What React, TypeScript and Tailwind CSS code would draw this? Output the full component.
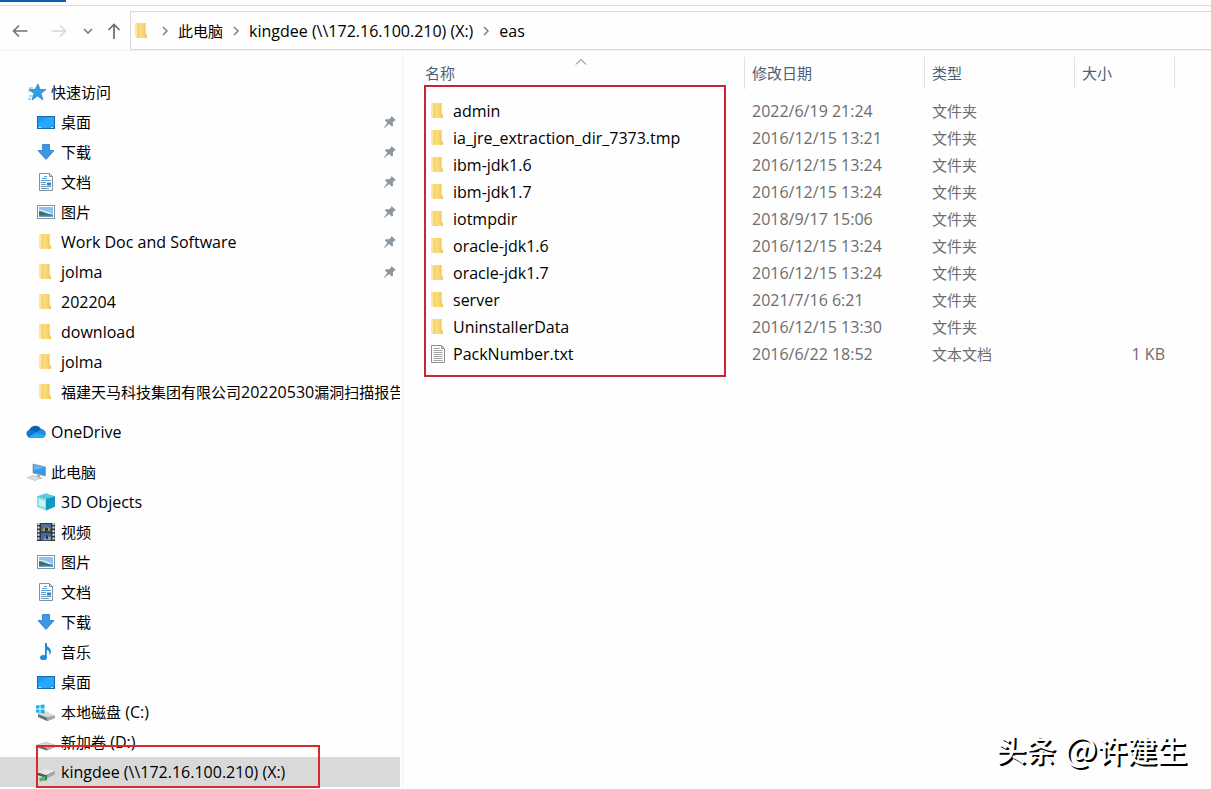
import type { ReactNode } from 'react'

type IconName =
  | 'star' | 'desktop' | 'download' | 'document' | 'picture' | 'folder' | 'cloud'
  | 'computer' | 'cube' | 'video' | 'music' | 'systemDrive' | 'drive' | 'netDrive' | 'text'

interface NavItem {
  label: string
  icon: IconName
  pinned?: boolean
  selected?: boolean
}

interface NavGroup {
  label: string
  icon: IconName
  items: NavItem[]
}

const navGroups: NavGroup[] = [
  {
    label: '快速访问',
    icon: 'star',
    items: [
      { label: '桌面', icon: 'desktop', pinned: true },
      { label: '下载', icon: 'download', pinned: true },
      { label: '文档', icon: 'document', pinned: true },
      { label: '图片', icon: 'picture', pinned: true },
      { label: 'Work Doc and Software', icon: 'folder', pinned: true },
      { label: 'jolma', icon: 'folder', pinned: true },
      { label: '202204', icon: 'folder' },
      { label: 'download', icon: 'folder' },
      { label: 'jolma', icon: 'folder' },
      { label: '福建天马科技集团有限公司20220530漏洞扫描报告', icon: 'folder' },
    ],
  },
  { label: 'OneDrive', icon: 'cloud', items: [] },
  {
    label: '此电脑',
    icon: 'computer',
    items: [
      { label: '3D Objects', icon: 'cube' },
      { label: '视频', icon: 'video' },
      { label: '图片', icon: 'picture' },
      { label: '文档', icon: 'document' },
      { label: '下载', icon: 'download' },
      { label: '音乐', icon: 'music' },
      { label: '桌面', icon: 'desktop' },
      { label: '本地磁盘 (C:)', icon: 'systemDrive' },
      { label: '新加卷 (D:)', icon: 'drive' },
      { label: 'kingdee (\\\\172.16.100.210) (X:)', icon: 'netDrive', selected: true },
    ],
  },
]

const files = [
  { name: 'admin', date: '2022/6/19 21:24', type: '文件夹', size: '' },
  { name: 'ia_jre_extraction_dir_7373.tmp', date: '2016/12/15 13:21', type: '文件夹', size: '' },
  { name: 'ibm-jdk1.6', date: '2016/12/15 13:24', type: '文件夹', size: '' },
  { name: 'ibm-jdk1.7', date: '2016/12/15 13:24', type: '文件夹', size: '' },
  { name: 'iotmpdir', date: '2018/9/17 15:06', type: '文件夹', size: '' },
  { name: 'oracle-jdk1.6', date: '2016/12/15 13:24', type: '文件夹', size: '' },
  { name: 'oracle-jdk1.7', date: '2016/12/15 13:24', type: '文件夹', size: '' },
  { name: 'server', date: '2021/7/16 6:21', type: '文件夹', size: '' },
  { name: 'UninstallerData', date: '2016/12/15 13:30', type: '文件夹', size: '' },
  { name: 'PackNumber.txt', date: '2016/6/22 18:52', type: '文本文档', size: '1 KB' },
]

const crumbs = ['此电脑', 'kingdee (\\\\172.16.100.210) (X:)', 'eas']

const drawings: Record<IconName, ReactNode> = {
  star: (
    <>
      <path d="M12 2l2 5.500h6l-5 4 2 6.500-5.500-4-5.500 4 2-6.500-5-4h6z" fill="#2f9fe8" stroke="#1c7fc4" strokeWidth=".7" />
      <path d="M3 6h4M2 9h3M3 14h4M2 17h3" stroke="#5db4ee" strokeWidth="1" />
    </>
  ),
  desktop: (
    <>
      <rect x="1.500" y="4.500" width="17" height="12" fill="#17a0fb" stroke="#1668a8" />
      <path d="M2 12L13 5h5v8l-8 3H2z" fill="#39b1ff" opacity=".5" />
      <path d="M3 15.500h2M15 15.500h2" stroke="#bfe6ff" />
    </>
  ),
  download: (
    <path d="M6.500 2.500h7v6h4.500L10 17.500 2 8.500h4.500z" fill="#3d97e6" stroke="#2a78c2" strokeWidth=".8" />
  ),
  document: (
    <>
      <path d="M3.500 1.500h10l3 3v14h-13z" fill="#fdfdfd" stroke="#8b8f94" />
      <path d="M13.500 1.500v3h3" fill="none" stroke="#8b8f94" />
      <path d="M8 4.500h3M6 6.500h5M5 8.500h10M5 10.500h5M5 12.500h5M5 14.500h10M5 16.500h8" stroke="#5a9dce" />
      <path d="M11 10.500h4v3h-4z" fill="#3b7fb4" />
    </>
  ),
  picture: (
    <>
      <rect x="1.500" y="3.500" width="17" height="13" fill="#fff" stroke="#7f96ab" />
      <path d="M3 5h14v10H3z" fill="#8fc3ef" />
      <path d="M3 8c4-1 8 2 14 4H3z" fill="#d7ecf8" />
      <path d="M3 9c4 0 7 3 14 4v2H3z" fill="#386f6c" />
      <path d="M3 13.500h14V15H3z" fill="#6d9cbb" />
    </>
  ),
  folder: (
    <>
      <path d="M3 2h10.500v11l1.500 1v3H5z" fill="#f9d978" />
      <path d="M3 2l3 1.500v14L3 16z" fill="#fbe7a4" />
      <path d="M6 3.500V16.500M12 2v13" stroke="#eec45c" strokeWidth=".8" />
      <path d="M12.500 2h1v11l1.500 1v3h-2.500z" fill="#f3ca63" />
    </>
  ),
  cloud: (
    <>
      <path d="M4 16a4 4 0 0 1-.5-7.500A6.500 6.500 0 0 1 15 7a4.600 4.600 0 0 1 1 9z" fill="#1279d0" />
      <path d="M5 5.500A6.300 6.300 0 0 1 15 7.200L9 11 2 9.200z" fill="#0f62b2" />
      <path d="M9 11l6-3.500a4.400 4.400 0 0 1 4.500 6L13 13z" fill="#1c90e4" />
      <path d="M0.500 12.500a3.600 3.600 0 0 1 3-4.200C6 8 8 9.500 10 10.600L2.500 15.300z" fill="#1279d0" />
      <path d="M2.500 15.300L10 10.600l9.400 3.200A3.600 3.600 0 0 1 16 16H4z" fill="#2ba7f0" />
    </>
  ),
  computer: (
    <>
      <path d="M7 2l12.500 3v9L7 11z" fill="#3998e2" stroke="#7898ae" strokeWidth=".7" />
      <path d="M8 3l10.500 2.500L8 8z" fill="#67b7f2" />
      <path d="M12 12.500l2 .5v2l3 1-3 1-5-1.500z" fill="#a7b0b7" />
      <path d="M1 15.500l6-2 8 2.500-6 2.500z" fill="#dadfe3" stroke="#b3babf" strokeWidth=".6" />
    </>
  ),
  cube: (
    <>
      <path d="M10 1.500l9 3v10l-9 4-9-4v-10z" fill="#32b5d0" />
      <path d="M1 4.500l9 2.500v11.500l-9-4z" fill="#8ce2e8" />
      <path d="M1 4.500l9-3 9 3L10 7z" fill="#55cddd" />
      <path d="M10 7l9-2.500v10l-9 4z" fill="#1398c2" />
      <path d="M3 7l6 2v6l-6-1.500z" fill="#c9f4f2" />
    </>
  ),
  video: (
    <>
      <path d="M1 1h18v18H1z" fill="#33373d" />
      <path d="M2.500 1v18M17.500 1v18" stroke="#e9edf0" strokeWidth="2" strokeDasharray="2 1.600" />
      <path d="M5 2h10v7.500H5z" fill="#5266a5" />
      <path d="M5 11h10v7.500H5z" fill="#3768c4" />
      <path d="M6 9l3-5 5 2-1 3zM7 18l3-4 5 1v3z" fill="#a9a147" />
      <path d="M9 5l3 1v3H9zM10 13l2 1v3h-2z" fill="#26343d" />
    </>
  ),
  music: (
    <>
      <path d="M9.500 1c1 4 5.500 4.500 5.500 8.500 0 1.500-.5 2.500-1.500 3.500.6-3-1-4.500-3-5.500V15" fill="#1b8ddd" />
      <ellipse cx="7.500" cy="15.500" rx="3.500" ry="2.600" fill="#1b8ddd" />
      <path d="M9 1h1.800v14.500H9z" fill="#1b8ddd" />
    </>
  ),
  systemDrive: (
    <>
      <path d="M2 12l7-2 10 4v2l-8 3-9-4z" fill="#6d7276" />
      <path d="M2 12l8-3 9 4.500-8 2z" fill="#d9dcde" />
      <path d="M11 15.500l8-2v2.500l-8 3z" fill="#a5a9ac" />
      <path d="M0 3.500l3.500-.5v3.500H0zM4.500 3L8.500 2.500v4h-4zM0 7.500h3.500V11L0 10.500zM4.500 7.500h4v4l-4-.5z" fill="#16b0ee" />
    </>
  ),
  drive: (
    <>
      <path d="M1 13l9-3 9 3v2l-8 3.500L1 15.500z" fill="#6b6e70" />
      <path d="M1 13l9-3 9 3-8 3z" fill="#dfd6d6" />
      <path d="M11 16l8-3v2l-8 3.500z" fill="#b9b0b0" />
    </>
  ),
  netDrive: (
    <>
      <path d="M1 10l9 3 9-4v3l-8 4-10-3z" fill="#55585a" />
      <path d="M1 10l8-3 10 2-9 4z" fill="#e6e7e7" />
      <path d="M11 13l8-4v3l-8 4z" fill="#a7a9aa" />
      <path d="M3 16.500l6-2.500 2 1v3l-7 1.500z" fill="#55b26c" />
      <path d="M9 14l2 1v3l-2 .5z" fill="#2d8746" />
    </>
  ),
  text: (
    <>
      <path d="M3.500 1.500h10l3 3v14h-13z" fill="#fff" stroke="#8f8f8f" />
      <path d="M13.500 1.500v3h3" fill="none" stroke="#8f8f8f" />
      <path d="M5.500 4.500h6M5.500 6.500h9M5.500 8.500h9M5.500 10.500h9M5.500 12.500h9M5.500 14.500h9M5.500 16.500h9" stroke="#a3a3a3" />
    </>
  ),
}

function Icon({ name }: { name: IconName }) {
  return (
    <svg viewBox="0 0 20 20" className="size-5 shrink-0" aria-hidden="true">
      {drawings[name]}
    </svg>
  )
}

function Pin() {
  return (
    <svg viewBox="0 0 14 14" className="ml-auto size-3.5 shrink-0" aria-hidden="true">
      <path d="M8.500 1L13 5.200l-1.400.4-1.800 1.900.2 3.500-1.200.6-2.600-2.500L1 13.300.7 13l3.700-5.200L2 5.400l.8-1.200 3.500.1 1.700-1.700z" fill="#8b969e" />
    </svg>
  )
}

function Chevron() {
  return (
    <svg viewBox="0 0 6 10" className="h-2.5 w-1.5 shrink-0" aria-hidden="true">
      <path d="M1 1l4 4-4 4" fill="none" stroke="#7c7c7c" strokeWidth="1.500" />
    </svg>
  )
}

// Latin runs are set one step larger than the Chinese around them
function Label({ text }: { text: string }) {
  return (
    <span className="whitespace-pre">
      {text.split(/([\x20-\x7e]+)/).map((part, i) =>
        i % 2 ? <span key={i} className="text-base leading-5">{part}</span> : part
      )}
    </span>
  )
}

function NavBar() {
  return (
    <div className="flex h-10 items-center border-b border-[#f3f3f3]">
      <div className="flex w-[130px] shrink-0 items-center pl-3">
        <button aria-label="后退">
          <svg viewBox="0 0 16 14" className="h-3.5 w-4">
            <path d="M15.500 7H1.500M7 1.500L1.500 7 7 12.500" fill="none" stroke="#727272" strokeWidth="1.600" />
          </svg>
        </button>
        <button aria-label="前进" className="ml-[23px]" disabled>
          <svg viewBox="0 0 16 14" className="h-3.5 w-4">
            <path d="M.5 7h14M9 1.500L14.500 7 9 12.500" fill="none" stroke="#d6d6d6" strokeWidth="1.500" />
          </svg>
        </button>
        <button aria-label="最近浏览的位置" className="ml-4">
          <svg viewBox="0 0 10 6" className="h-1.5 w-2.5">
            <path d="M1 1l4 4 4-4" fill="none" stroke="#777" strokeWidth="1.600" />
          </svg>
        </button>
        <button aria-label="向上" className="ml-3.5">
          <svg viewBox="0 0 14 16" className="h-4 w-3.5">
            <path d="M7 16V1.500M1.500 7L7 1.500 12.500 7" fill="none" stroke="#6a6a6a" strokeWidth="1.700" />
          </svg>
        </button>
      </div>
      <nav aria-label="地址" className="flex h-[39px] min-w-0 flex-1 items-center border border-r-0 border-[#d9d9d9] pl-px">
        <Icon name="folder" />
        {crumbs.map(crumb => (
          <div key={crumb} className="flex items-center">
            <span className="px-2.5"><Chevron /></span>
            <button><Label text={crumb} /></button>
          </div>
        ))}
      </nav>
    </div>
  )
}

function Sidebar() {
  return (
    <aside className="w-[403px] shrink-0 border-r border-[#f4f4f4] pt-[26px] pr-0.5">
      <ul className="flex flex-col gap-2.5">
        {navGroups.map(group => (
          <li key={group.label}>
            <a href="#" className="flex h-[30px] items-center gap-[5px] pl-[26px]">
              <Icon name={group.icon} />
              <Label text={group.label} />
            </a>
            <ul>
              {group.items.map((item, i) => (
                <li key={i} className={item.selected ? 'relative bg-[#d9d9d9]' : ''}>
                  <a href="#" className="flex h-[30px] items-center gap-[5px] overflow-hidden pl-9 pr-[3px]">
                    <Icon name={item.icon} />
                    <Label text={item.label} />
                    {item.pinned && <Pin />}
                  </a>
                  {item.selected && (
                    <div className="pointer-events-none absolute -top-3 left-9 h-[43px] w-[284px] border-2 border-[#d9272e]" />
                  )}
                </li>
              ))}
            </ul>
          </li>
        ))}
      </ul>
    </aside>
  )
}

function FileList() {
  return (
    <main className="min-w-0 flex-1 pl-[15px] pt-1.5">
      <div className="relative">
        <table className="w-full table-fixed border-collapse text-left">
          <colgroup>
            <col className="w-[327px]" />
            <col className="w-[180px]" />
            <col className="w-[150px]" />
            <col className="w-[100px]" />
            <col />
          </colgroup>
          <thead className="text-[#4c607a]">
            <tr>
              {['名称', '修改日期', '类型', '大小'].map((title, i) => (
                <th key={title} className="p-0 pb-2 font-normal">
                  <button className="relative block h-8 w-full border-r border-[#e2e2e2] px-[7px] text-left">
                    {title}
                    {i === 0 && (
                      <svg viewBox="0 0 12 6" className="absolute left-1/2 top-0.5 h-1.5 w-3 -translate-x-1/2" aria-hidden="true">
                        <path d="M1 5.500l5-5 5 5" fill="none" stroke="#6b6b6b" />
                      </svg>
                    )}
                  </button>
                </th>
              ))}
              <td />
            </tr>
          </thead>
          <tbody className="text-[#6d6d6d]">
            {files.map(file => (
              <tr key={file.name} className="h-[27px]">
                <td className="p-0 pl-2.5 text-black">
                  <div className="flex items-center gap-[5px]">
                    <Icon name={file.name.endsWith('.txt') ? 'text' : 'folder'} />
                    <Label text={file.name} />
                  </div>
                </td>
                <td className="p-0 px-[7px]"><Label text={file.date} /></td>
                <td className="p-0 px-[7px]"><Label text={file.type} /></td>
                <td className="p-0 px-2.5 text-right"><Label text={file.size} /></td>
                <td />
              </tr>
            ))}
          </tbody>
        </table>
        <div className="pointer-events-none absolute left-1.5 top-7 h-[292px] w-[302px] border-2 border-[#c9252d]" />
      </div>
    </main>
  )
}

export default function App() {
  return (
    <div className="relative flex min-h-screen flex-col bg-[#fefefe] font-['Open_Sans','Noto_Sans_CJK_SC',sans-serif] text-[15px] leading-5 text-black">
      <div className="mb-[5px] h-1.5 border-b border-[#dcdcdc]">
        <div className="h-0.5 w-[66px] bg-[#0a5fb0]" />
      </div>
      <NavBar />
      <div className="flex flex-1">
        <Sidebar />
        <FileList />
      </div>
      <div className="absolute bottom-5 right-6 flex gap-2 font-['Noto_Sans_CJK_SC',sans-serif] text-[30px] leading-10 font-medium text-white [text-shadow:2px_2px_0_#000]">
        <span>头条</span>
        <span><span className="text-[34px]">@</span>许建生</span>
      </div>
    </div>
  )
}
